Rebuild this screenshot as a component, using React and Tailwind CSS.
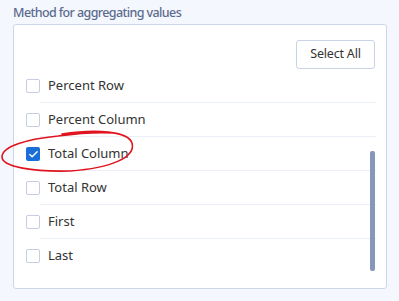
import { Check } from 'lucide-react';

const rows = [
  { label: 'Percent Row', checked: false },
  { label: 'Percent Column', checked: false },
  { label: 'Total Column', checked: true },
  { label: 'Total Row', checked: false },
  { label: 'First', checked: false },
  { label: 'Last', checked: false },
];

function Box({ checked }) {
  return checked ? (
    <div className="flex h-[14px] w-[14px] shrink-0 items-center justify-center rounded-[2px] bg-[#1a6ed8]">
      <Check className="h-[11px] w-[11px] text-white" strokeWidth={3} />
    </div>
  ) : (
    <div className="h-[14px] w-[14px] shrink-0 rounded-[2px] border border-[#c4cee0] bg-white" />
  );
}

export default function App() {
  return (
    <div className="relative h-[301px] w-[399px] overflow-hidden bg-[#f4f7fd] font-['Noto_Sans','Open_Sans',sans-serif]">
      <p className="pl-[13px] pt-[3px] text-[12.5px] font-medium leading-[20px] tracking-[-0.6px] text-[#5b6b8e]">
        Method for aggregating values
      </p>

      <div className="ml-[13px] mt-[1px] h-[265px] w-[374px] rounded-[3px] border border-[#cdd6e8] bg-white">
        <div className="flex justify-end pr-[11px] pt-[15px]">
          <button className="h-[29px] w-[79px] rounded-[3px] border border-[#c9d3e6] bg-white text-[12.5px] tracking-[-0.2px] text-[#333]">
            Select All
          </button>
        </div>

        <div className="relative">
          {rows.map((r, i) => (
            <div key={r.label} className="flex h-[34px] items-center pl-[12px]">
              <Box checked={r.checked} />
              <div
                className={
                  i < rows.length - 1
                    ? 'mr-[10px] flex h-full flex-1 items-center border-b border-[#e9eef7] pl-[8px] text-[13px] text-[#333]'
                    : 'mr-[10px] flex h-full flex-1 items-center pl-[8px] text-[13px] text-[#333]'
                }
              >
                {r.label}
              </div>
            </div>
          ))}
          {/* scrollbar thumb */}
          <div className="absolute right-[11px] top-[82px] h-[120px] w-[5px] rounded-[2px] bg-[#8797b9]" />
        </div>
      </div>

      {/* red annotation loop */}
      <svg className="absolute left-0 top-0" width="399" height="301" viewBox="0 0 399 301" fill="none">
        <path
          d="M62 134 C 96 129, 128 131, 132 143 C 136 157, 112 168, 70 171 C 34 172, 2 167, 2 157 C 2 146, 28 139, 58 136 C 80 133, 100 132, 114 133"
          stroke="#e0141e"
          strokeWidth="1.6"
          strokeLinecap="round"
        />
      </svg>
    </div>
  );
}
